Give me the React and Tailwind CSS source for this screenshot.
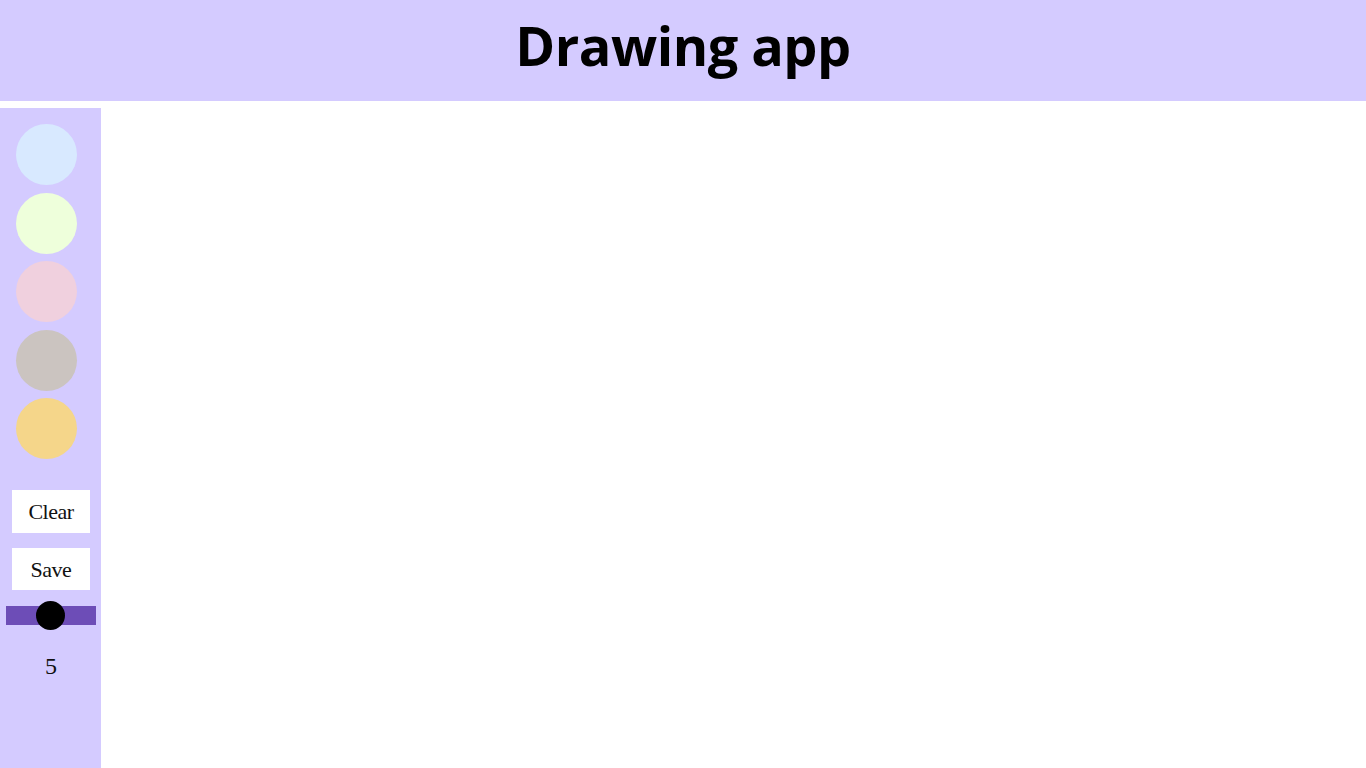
import React, { useState } from "react";

const colors = ["#d8e9ff", "#eeffdb", "#f0d0de", "#cbc4c0", "#f5d68a"];

const App = () => {
  const [size, setSize] = useState(5);

  return (
    <div className="min-h-screen w-full bg-white">
      {/* Header */}
      <header className="flex h-[101px] items-center justify-center bg-[#d4cbff] pb-[12px]">
        <h1 className="font-['Open_Sans',sans-serif] text-[54px] font-bold leading-none tracking-[-0.5px] text-black">
          Drawing app
        </h1>
      </header>

      <div className="mt-[7px] flex">
        {/* Toolbar */}
        <aside className="flex h-[660px] w-[101px] flex-col bg-[#d4cbff] pt-[16px]">
          <div className="flex flex-col gap-[7.5px] pl-[16px]">
            {colors.map((c) => (
              <button
                key={c}
                className="h-[61px] w-[61px] rounded-full"
                style={{ backgroundColor: c }}
              />
            ))}
          </div>

          <div className="mt-[31px] flex flex-col items-center pl-px">
            <button className="h-[43px] w-[78px] bg-white font-['Liberation_Serif',serif] text-[22px] font-light tracking-[-0.5px] text-[#111]">
              Clear
            </button>
            <button className="mt-[15px] h-[42px] w-[78px] bg-white font-['Liberation_Serif',serif] text-[22px] font-light tracking-[-0.5px] text-[#111]">
              Save
            </button>
            <div className="relative mt-[16px] h-[19px] w-[90px] bg-[#6d4db7]">
              <div className="absolute left-[30px] top-[-5px] h-[29px] w-[29px] rounded-full bg-black" />
            </div>
            <span className="mt-[29px] font-['Liberation_Serif',serif] text-[24px] leading-none text-[#111]">
              {size}
            </span>
          </div>
        </aside>

        {/* Canvas */}
        <div className="h-[660px] flex-1 bg-white" />
      </div>
    </div>
  );
};

export default App;
